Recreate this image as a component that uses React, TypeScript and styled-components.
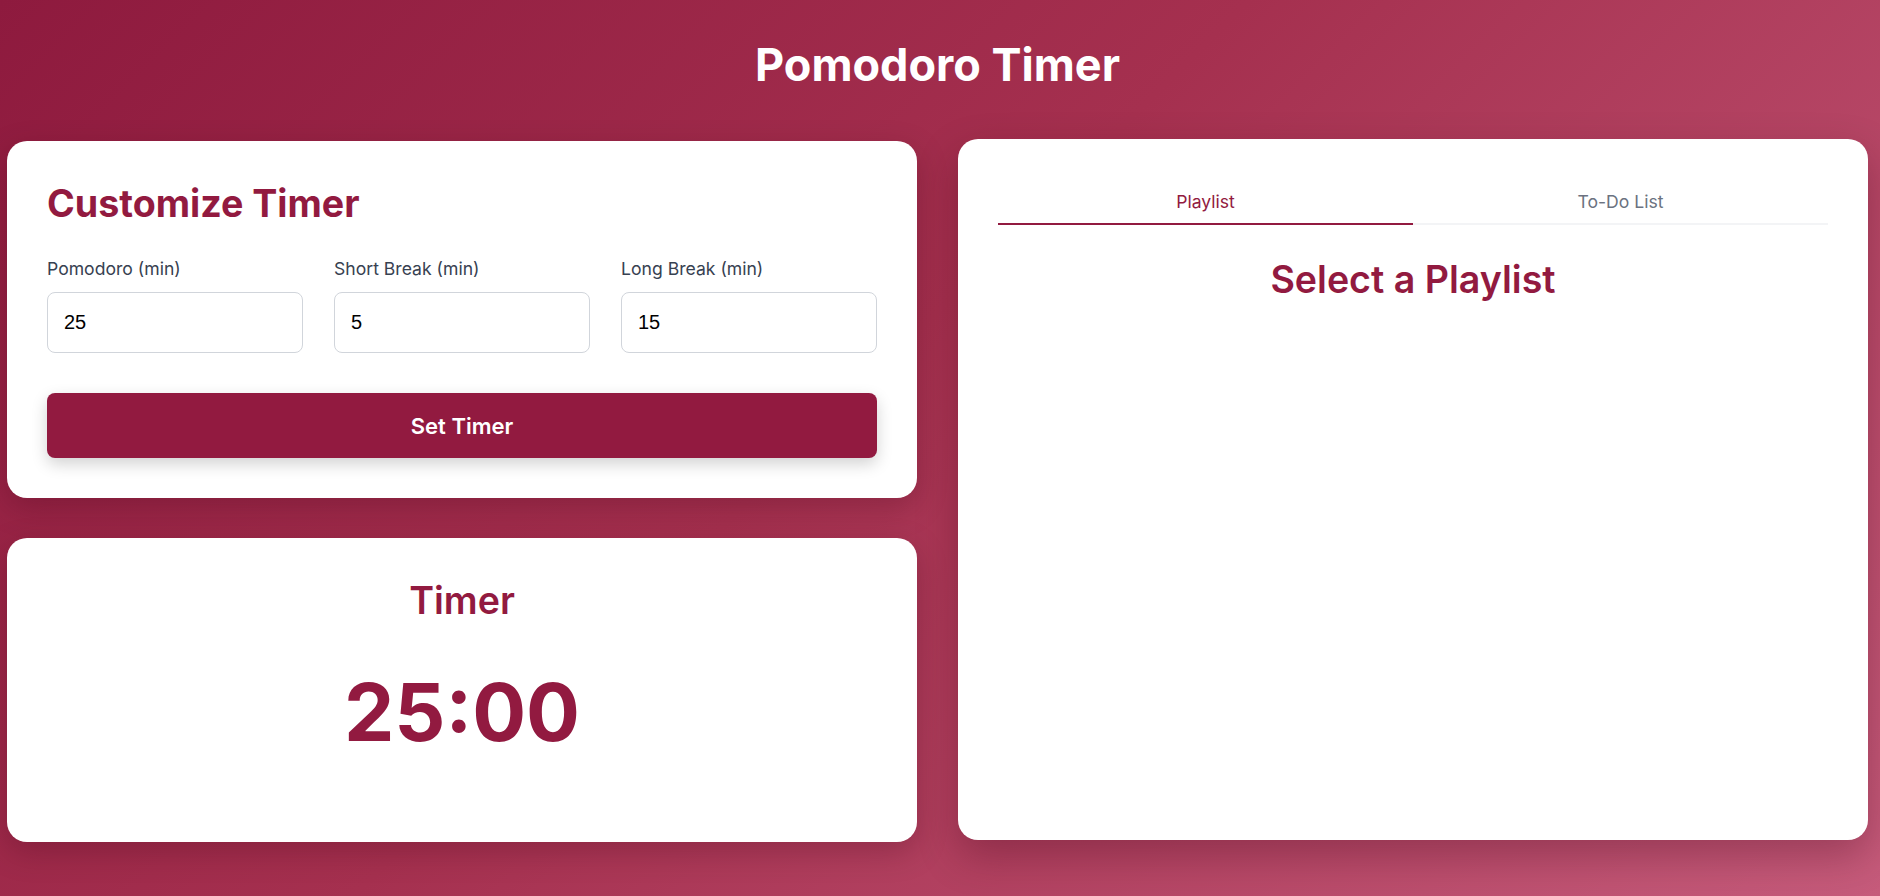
import React, { useState } from 'react';
import styled, { createGlobalStyle } from 'styled-components';

const crimson = '#921a40';

const GlobalStyle = createGlobalStyle`
    * {
        box-sizing: border-box;
    }

    html, body {
        margin: 0;
        padding: 0;
        font-family: Inter, "Noto Sans", sans-serif;
    }
`;

const Page = styled.div`
    min-height: 100vh;
    padding: 38px 12px 40px 7px;
    background: linear-gradient(135deg, #8e1a3e 0%, #a5304f 45%, #c65b7b 100%);
`;

const Title = styled.h1`
    margin: 0 0 49px;
    text-align: center;
    color: #fff;
    font-size: 45px;
    line-height: 1.2;
    font-weight: 700;
`;

const Layout = styled.main`
    display: grid;
    grid-template-columns: 1fr 1fr;
    gap: 41px;
    align-items: stretch;
`;

const Column = styled.div`
    display: flex;
    flex-direction: column;
    gap: 40px;
`;

const Card = styled.section<{ grow?: boolean; centered?: boolean; raised?: boolean }>`
    background: #fff;
    border-radius: 20px;
    padding: 40px;
    box-shadow: ${props => (props.raised
        ? '0 16px 40px rgba(60, 0, 20, 0.3)'
        : '0 10px 30px rgba(60, 0, 20, 0.25)')};
    transform: ${props => (props.raised ? 'translateY(-2px)' : 'none')};
    min-height: ${props => (props.raised ? '701px' : '0')};
    flex: ${props => (props.grow ? 1 : 'none')};
    text-align: ${props => (props.centered ? 'center' : 'left')};
`;

const CardHeading = styled.h2<{ weight?: number }>`
    margin: 0;
    color: ${crimson};
    font-size: 37.6px;
    line-height: 1.2;
    font-weight: ${props => props.weight ?? 700};
`;

const FieldGrid = styled.div`
    display: grid;
    grid-template-columns: repeat(3, 1fr);
    gap: 31px;
    margin-top: 30px;
`;

const Field = styled.label`
    display: flex;
    flex-direction: column;
    gap: 10px;
`;

const FieldLabel = styled.span`
    color: #374151;
    font-size: 17.6px;
    line-height: 26px;
    font-weight: 400;
`;

const NumberInput = styled.input`
    height: 61px;
    width: 100%;
    padding: 0 16px;
    border: 1px solid #d1d5db;
    border-radius: 8px;
    font-family: "Liberation Sans", Arial, sans-serif;
    font-size: 20px;
    color: #000;
    background: #fff;
    outline: none;
`;

const SetButton = styled.button`
    display: block;
    width: 100%;
    height: 65px;
    margin-top: 40px;
    border: none;
    border-radius: 8px;
    background: ${crimson};
    color: #fff;
    font-family: Inter, sans-serif;
    font-size: 22px;
    font-weight: 600;
    box-shadow: 0 6px 16px rgba(0, 0, 0, 0.18);
    cursor: pointer;
`;

const TimeDisplay = styled.div`
    margin-top: 41px;
    color: ${crimson};
    font-size: 80px;
    line-height: 1.2;
    font-weight: 700;
`;

const TabList = styled.div`
    display: grid;
    grid-template-columns: 1fr 1fr;
    border-bottom: 2px solid #f3f4f6;
`;

const Tab = styled.button<{ active?: boolean }>`
    padding: 10px 0 8px;
    margin-bottom: -2px;
    border: none;
    border-bottom: 2px solid ${props => (props.active ? crimson : 'transparent')};
    background: transparent;
    font-family: Inter, sans-serif;
    font-size: 17.6px;
    line-height: 26px;
    font-weight: 400;
    color: ${props => (props.active ? crimson : '#6b7280')};
    cursor: pointer;
`;

const PanelHeading = styled(CardHeading)`
    margin-top: 32px;
    text-align: center;
`;

export default function App() {
    const [tab, setTab] = useState<'playlist' | 'todo'>('playlist');
    const [pomodoro, setPomodoro] = useState('25');
    const [shortBreak, setShortBreak] = useState('5');
    const [longBreak, setLongBreak] = useState('15');

    return (
        <>
            <GlobalStyle />
            <Page>
                <Title>Pomodoro Timer</Title>
                <Layout>
                    <Column>
                        <Card>
                            <CardHeading>Customize Timer</CardHeading>
                            <FieldGrid>
                                <Field>
                                    <FieldLabel>Pomodoro (min)</FieldLabel>
                                    <NumberInput type="number" value={pomodoro} onChange={e => setPomodoro(e.target.value)} />
                                </Field>
                                <Field>
                                    <FieldLabel>Short Break (min)</FieldLabel>
                                    <NumberInput type="number" value={shortBreak} onChange={e => setShortBreak(e.target.value)} />
                                </Field>
                                <Field>
                                    <FieldLabel>Long Break (min)</FieldLabel>
                                    <NumberInput type="number" value={longBreak} onChange={e => setLongBreak(e.target.value)} />
                                </Field>
                            </FieldGrid>
                            <SetButton>Set Timer</SetButton>
                        </Card>

                        <Card grow centered>
                            <CardHeading weight={600}>Timer</CardHeading>
                            <TimeDisplay>25:00</TimeDisplay>
                        </Card>
                    </Column>

                    <Card raised>
                        <TabList>
                            <Tab active={tab === 'playlist'} onClick={() => setTab('playlist')}>Playlist</Tab>
                            <Tab active={tab === 'todo'} onClick={() => setTab('todo')}>To-Do List</Tab>
                        </TabList>
                        <PanelHeading weight={600}>
                            {tab === 'playlist' ? 'Select a Playlist' : 'To-Do List'}
                        </PanelHeading>
                    </Card>
                </Layout>
            </Page>
        </>
    );
}
